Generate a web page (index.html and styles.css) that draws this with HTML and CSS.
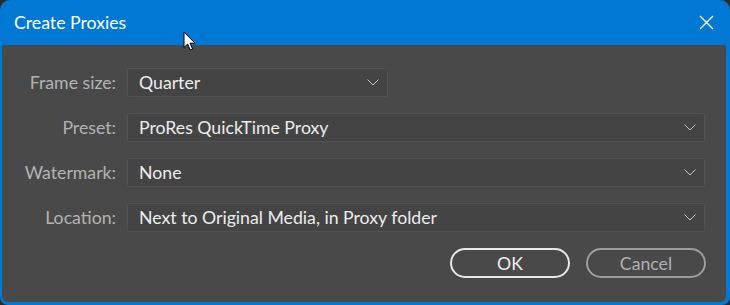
FILE: index.html
```html
<!DOCTYPE html>
<html lang="en">
<head>
    <meta charset="utf-8">
    <title>Create Proxies</title>
    <link rel="stylesheet" href="styles.css">
</head>
<body>
    <div class="vindue">
        <header class="titel">
            <h1>Create Proxies</h1>
            <button class="luk" aria-label="Close">
                <svg width="15" height="15" viewBox="0 0 15 15"><path d="M1 1 L14 14 M14 1 L1 14" stroke="#fff" stroke-width="1.3" fill="none"/></svg>
            </button>
        </header>

        <main class="indhold">
            <form class="felter">
                <label>Frame size:</label>
                <div class="vaelg kort"><span>Quarter</span>
                    <svg class="pil" width="12" height="7" viewBox="0 0 12 7"><path d="M0.5 0.5 L6 6 L11.5 0.5" stroke="#c4c4c4" fill="none"/></svg>
                </div>

                <label>Preset:</label>
                <div class="vaelg"><span>ProRes QuickTime Proxy</span>
                    <svg class="pil" width="12" height="7" viewBox="0 0 12 7"><path d="M0.5 0.5 L6 6 L11.5 0.5" stroke="#c4c4c4" fill="none"/></svg>
                </div>

                <label>Watermark:</label>
                <div class="vaelg"><span>None</span>
                    <svg class="pil" width="12" height="7" viewBox="0 0 12 7"><path d="M0.5 0.5 L6 6 L11.5 0.5" stroke="#c4c4c4" fill="none"/></svg>
                </div>

                <label>Location:</label>
                <div class="vaelg"><span>Next to Original Media, in Proxy folder</span>
                    <svg class="pil" width="12" height="7" viewBox="0 0 12 7"><path d="M0.5 0.5 L6 6 L11.5 0.5" stroke="#c4c4c4" fill="none"/></svg>
                </div>
            </form>

            <div class="knapper">
                <button class="knap ok">OK</button>
                <button class="knap annuller">Cancel</button>
            </div>
        </main>

        <svg class="markoer" width="14" height="21" viewBox="0 0 14 21">
            <path d="M1 1 L1 16.5 L4.6 13 L7.3 19 L9.6 18 L7 12.2 L12 12.2 Z" fill="#fff" stroke="#000" stroke-width="1" stroke-linejoin="round"/>
        </svg>
    </div>
</body>
</html>
```

FILE: styles.css
```css
* {
    box-sizing: border-box;
}

html,
body {
    margin: 0;
    background-color: #2b2b2b;
}

.vindue {
    position: relative;
    width: 730px;
    height: 305px;
    display: flex;
    flex-direction: column;
    background-color: #0078d4;
    border-radius: 10px 10px 8px 8px;
    overflow: hidden;
}

.titel {
    height: 45px;
    display: flex;
    align-items: center;
    justify-content: space-between;
    padding: 0 16px 0 14px;
}

h1 {
    margin: 0;
    font-family: Lato, sans-serif;
    font-weight: 400;
    font-size: 17.7px;
    color: #ffffff;
}

.luk {
    background: none;
    border: 0;
    padding: 0;
    display: flex;
}

.indhold {
    flex: 1;
    background-color: #494949;
    margin: 0 4px 3px 2px;
    border-radius: 0 0 6px 6px;
    padding: 23px 21px 0 0;
    font-family: Lato, sans-serif;
    font-size: 17.7px;
}

.felter {
    display: grid;
    grid-template-columns: 114px 1fr;
    column-gap: 11px;
    row-gap: 16px;
    align-items: center;
    margin: 0;
}

label {
    text-align: right;
    color: #b3b3b3;
}

.vaelg {
    height: 29px;
    display: flex;
    align-items: center;
    justify-content: space-between;
    padding: 0 8px 0 11px;
    background-color: #444444;
    border: 1px solid #525252;
    border-radius: 2px;
    color: #ececec;
}

.kort {
    width: 261px;
}

.pil {
    margin-top: -1px;
}

.knapper {
    display: flex;
    justify-content: flex-end;
    gap: 16px;
    margin-top: 16px;
    margin-right: -1px;
}

.knap {
    width: 120px;
    height: 30px;
    border-radius: 15px;
    background: none;
    font-family: Lato, sans-serif;
    font-size: 17.7px;
    padding: 0;
}

.ok {
    border: 2px solid #e8e8e8;
    color: #ededed;
}

.annuller {
    border: 2px solid #9e9e9e;
    color: #b0b0b0;
}

.markoer {
    position: absolute;
    left: 183px;
    top: 31px;
}
```
